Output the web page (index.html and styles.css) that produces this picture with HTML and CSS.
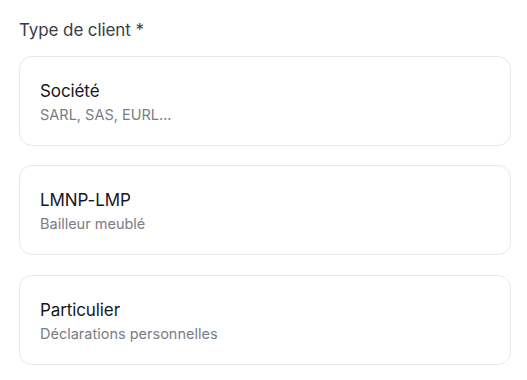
FILE: index.html
```html
<!DOCTYPE html>
<html lang="fr">
<head>
<meta charset="utf-8">
<link rel="stylesheet" href="styles.css">
</head>
<body>
<div class="field">
  <div class="label">Type de client *</div>
  <div class="options">
    <div class="card">
      <div class="title">Société</div>
      <div class="sub">SARL, SAS, EURL...</div>
    </div>
    <div class="card">
      <div class="title">LMNP-LMP</div>
      <div class="sub">Bailleur meublé</div>
    </div>
    <div class="card">
      <div class="title">Particulier</div>
      <div class="sub">Déclarations personnelles</div>
    </div>
  </div>
</div>
</body>
</html>
```
FILE: styles.css
```css
html, body {
  margin: 0;
  background: #ffffff;
}
body {
  font-family: Inter, "Noto Sans", sans-serif;
  -webkit-font-smoothing: antialiased;
}
.field {
  padding: 18px 16px 0 19px;
}
.label {
  font-size: 17px;
  line-height: 24px;
  color: #3a3d45;
  margin-bottom: 13.5px;
  letter-spacing: -0.1px;
}
.options {
  display: flex;
  flex-direction: column;
  gap: 19.5px;
}
.card {
  border: 1px solid #e6e7ea;
  border-radius: 13px;
  height: 90px;
  box-sizing: border-box;
  padding: 3px 20px 0;
  display: flex;
  flex-direction: column;
  justify-content: center;
}
.title {
  font-size: 17px;
  line-height: 22px;
  color: #16181d;
  letter-spacing: -0.1px;
}
.sub {
  font-size: 14.5px;
  line-height: 21px;
  color: #7a7d85;
  margin-top: 2px;
}
```
